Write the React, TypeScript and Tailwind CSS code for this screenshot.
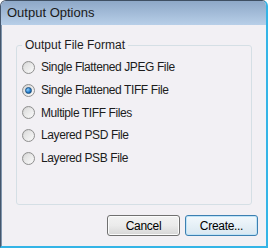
import * as React from "react";

const options = [
  "Single Flattened JPEG File",
  "Single Flattened TIFF File",
  "Multiple TIFF Files",
  "Layered PSD File",
  "Layered PSB File",
];

function Radio({ checked }: { checked?: boolean }) {
  return (
    <span className="relative flex h-[13px] w-[13px] shrink-0 items-center justify-center rounded-full border border-[#8f8f8f] bg-gradient-to-br from-[#d0d0d0] to-[#fbfbfb]">
      <span className="h-[9px] w-[9px] rounded-full bg-gradient-to-br from-[#dcdcdc] to-[#f8f8f8]" />
      {checked && (
        <span className="absolute h-[7px] w-[7px] rounded-full border border-[#1a4f80] bg-[radial-gradient(circle_at_35%_35%,#8ed0ff,#1f78c8_60%,#0e3f70)]" />
      )}
    </span>
  );
}

function Button({ label, primary }: { label: string; primary?: boolean }) {
  return (
    <button
      className={
        primary
          ? "h-[21px] w-[73px] rounded-[3px] border border-[#3c7fb1] bg-gradient-to-b from-[#f2f8fc] to-[#d9e7f1] text-[12px] tracking-[-0.3px] text-black shadow-[inset_0_0_0_1px_#bfe3f7]"
          : "h-[21px] w-[73px] rounded-[3px] border border-[#707070] bg-gradient-to-b from-[#f2f2f2] via-[#ebebeb] to-[#d6d6d6] text-[12px] tracking-[-0.3px] text-black shadow-[inset_0_0_0_1px_#fbfbfb]"
      }
    >
      {label}
    </button>
  );
}

export default function App() {
  const [selected, setSelected] = React.useState(1);
  return (
    <div
      className="flex h-[248px] w-[268px] flex-col overflow-hidden rounded-t-[6px] border-b-2 border-l border-r-2 border-t border-b-[#34b4e6] border-l-[#45566c] border-r-[#34b4e6] border-t-[#3f4f63] bg-[#f2f0f4] text-[#1c1c1c]"
      style={{ fontFamily: '"Liberation Sans", Arial, sans-serif' }}
    >
      <div className="flex h-[24px] shrink-0 items-center bg-gradient-to-b from-[#8ea8c8] to-[#b8cfe8] pl-[6px] text-[13px] text-[#1a1a1a]">
        Output Options
      </div>
      <div className="flex flex-1 flex-col border-l border-[#7f95ad] px-[14px] pt-[13px]">
        <fieldset className="m-0 h-[167px] rounded-[3px] border border-[#d5dfe5] px-[5px] pb-0 pt-[4px]">
          <legend className="px-[3px] text-[12px] leading-[14px]">
            Output File Format
          </legend>
          <div className="flex flex-col">
            {options.map((o, i) => (
              <label
                key={o}
                onClick={() => setSelected(i)}
                className="flex h-[22.7px] items-center gap-[6px] text-[12px] tracking-[-0.4px]"
              >
                <Radio checked={selected === i} />
                <span>{o}</span>
              </label>
            ))}
          </div>
        </fieldset>
        <div className="-mr-[6px] mt-[10px] flex justify-end gap-[5px]">
          <Button label="Cancel" />
          <Button label="Create..." primary />
        </div>
      </div>
    </div>
  );
}
